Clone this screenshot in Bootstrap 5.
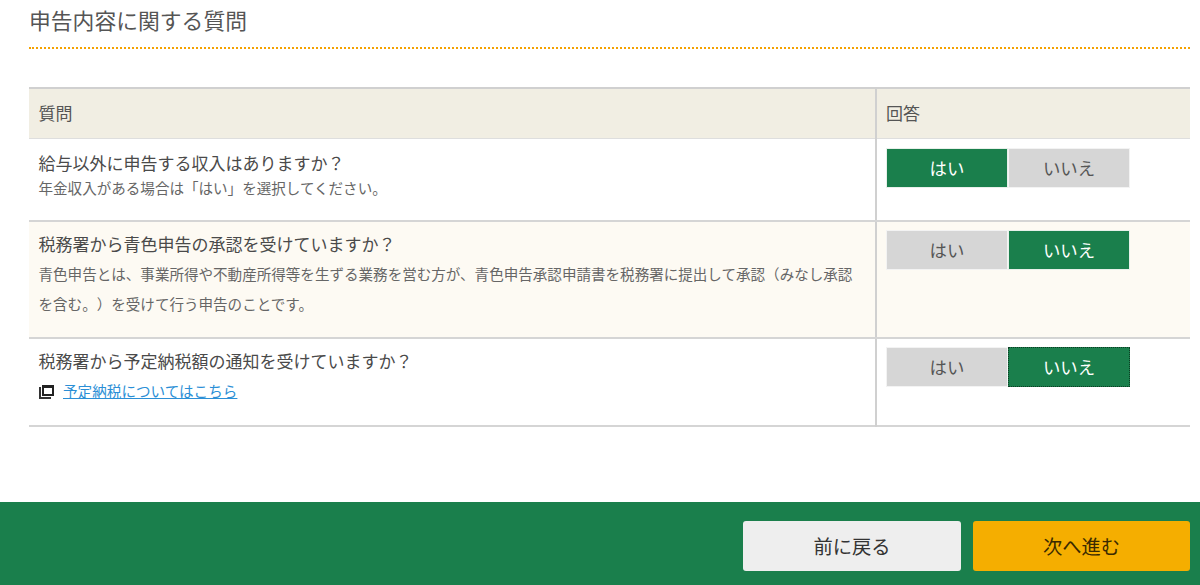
<!DOCTYPE html>
<html lang="ja">
<head>
<meta charset="utf-8">
<title>申告内容に関する質問</title>
<link rel="stylesheet" href="https://cdn.jsdelivr.net/npm/bootstrap@5.3.0/dist/css/bootstrap.min.css">
<style>
html,body{height:585px;overflow:hidden}
body{font-family:"Noto Sans CJK JP","Liberation Sans",sans-serif;color:#444;background:#fff;display:flex;flex-direction:column;text-spacing-trim:space-all}
.page-main{flex:1;padding:0 10px 0 29px}
.page-title{font-size:21.8px;line-height:30px;font-weight:400;color:#555;margin:0;padding:5px 0 12px 0;border-bottom:2px dotted #f5a100}
.qa-table{width:100%;margin-top:38px;border-collapse:collapse;table-layout:fixed;border-top:2px solid #d0d0d0;border-bottom:2px solid #d5d5d5}
.qa-table th{height:50px;background:#f1eee3;font-weight:400;font-size:17px;padding:0 9px 2px 9.5px;border-bottom:1px solid #dedede;color:#555}
.qa-table td{vertical-align:top;padding:9px 9px 9px 9.5px;border-bottom:2px solid #d5d5d5}
.qa-table tr:last-child td{border-bottom:0}
.qa-table th:first-child,.qa-table td:first-child{border-right:2px solid #d0d0d0}
.qa-table th:last-child,.qa-table td:last-child{padding-left:9px}
.col-answer{width:314px}
.row-tint td{background:#fdfaf3}
.q-text{font-size:17px;line-height:26px;color:#4a4a4a}
.q-note{font-size:14.55px;line-height:20px;color:#666;margin-top:2px}
.q-note-wide{line-height:30px;padding-right:12px}
.r1 .q-text{margin-top:2px}
.q-link{font-size:14.6px;line-height:24px;margin-top:5px;display:flex;align-items:center;gap:9.5px}
.q-link a{color:#2b8fd6}
.r1{height:83px}.r2{height:117px}.r3{height:88px}
.qa-table .r2 td:last-child,.qa-table .r3 td:last-child{padding-top:8px}
.yn-btn{width:122px;height:40px;border:1px solid #f3f3f3;border-radius:0;background:#d6d6d6;color:#555;font-size:17.4px;padding:0;line-height:38px}
.yn-on{background:#1a7f4c;color:#fff;border-color:#e8f0ea}
.yn-focus{outline:1px dotted #0d3d24;outline-offset:-1px;border-color:#1a7f4c}
.foot-bar{height:83px;background:#1a7f4c;padding:19px 10px 0 0;flex:none}
.foot-btn{height:50px;border-radius:3px;border:0;font-size:19.3px;padding:0;color:#333}
.foot-back{width:218px;background:#eee;margin-right:4px}
.foot-next{width:217px;background:#f5ae00;color:#3a2a00}
</style>
</head>
<body>
<main class="page-main">
<h1 class="page-title">申告内容に関する質問</h1>
<table class="qa-table">
<thead><tr><th>質問</th><th class="col-answer">回答</th></tr></thead>
<tbody>
<tr class="r1"><td><div class="q-text">給与以外に申告する収入はありますか？</div><div class="q-note">年金収入がある場合は「はい」を選択してください。</div></td>
<td><div class="d-flex"><button class="yn-btn yn-on" type="button">はい</button><button class="yn-btn" type="button">いいえ</button></div></td></tr>
<tr class="r2 row-tint"><td><div class="q-text">税務署から青色申告の承認を受けていますか？</div><div class="q-note q-note-wide">青色申告とは、事業所得や不動産所得等を生ずる業務を営む方が、青色申告承認申請書を税務署に提出して承認（みなし承認を含む。）を受けて行う申告のことです。</div></td>
<td><div class="d-flex"><button class="yn-btn" type="button">はい</button><button class="yn-btn yn-on" type="button">いいえ</button></div></td></tr>
<tr class="r3"><td><div class="q-text">税務署から予定納税額の通知を受けていますか？</div><div class="q-link"><svg width="15" height="15" viewBox="0 0 15 15" aria-hidden="true"><path d="M0 3h2v10h10v2H0z" fill="#333"/><path d="M3 1h12v11H3z" fill="#222"/><path d="M5 4h8v6H5z" fill="#fff"/></svg><a href="#">予定納税についてはこちら</a></div></td>
<td><div class="d-flex"><button class="yn-btn" type="button">はい</button><button class="yn-btn yn-on yn-focus" type="button">いいえ</button></div></td></tr>
</tbody>
</table>
</main>
<footer class="foot-bar d-flex justify-content-end gap-2">
<button class="foot-btn foot-back" type="button">前に戻る</button>
<button class="foot-btn foot-next" type="button">次へ進む</button>
</footer>
</body>
</html>
